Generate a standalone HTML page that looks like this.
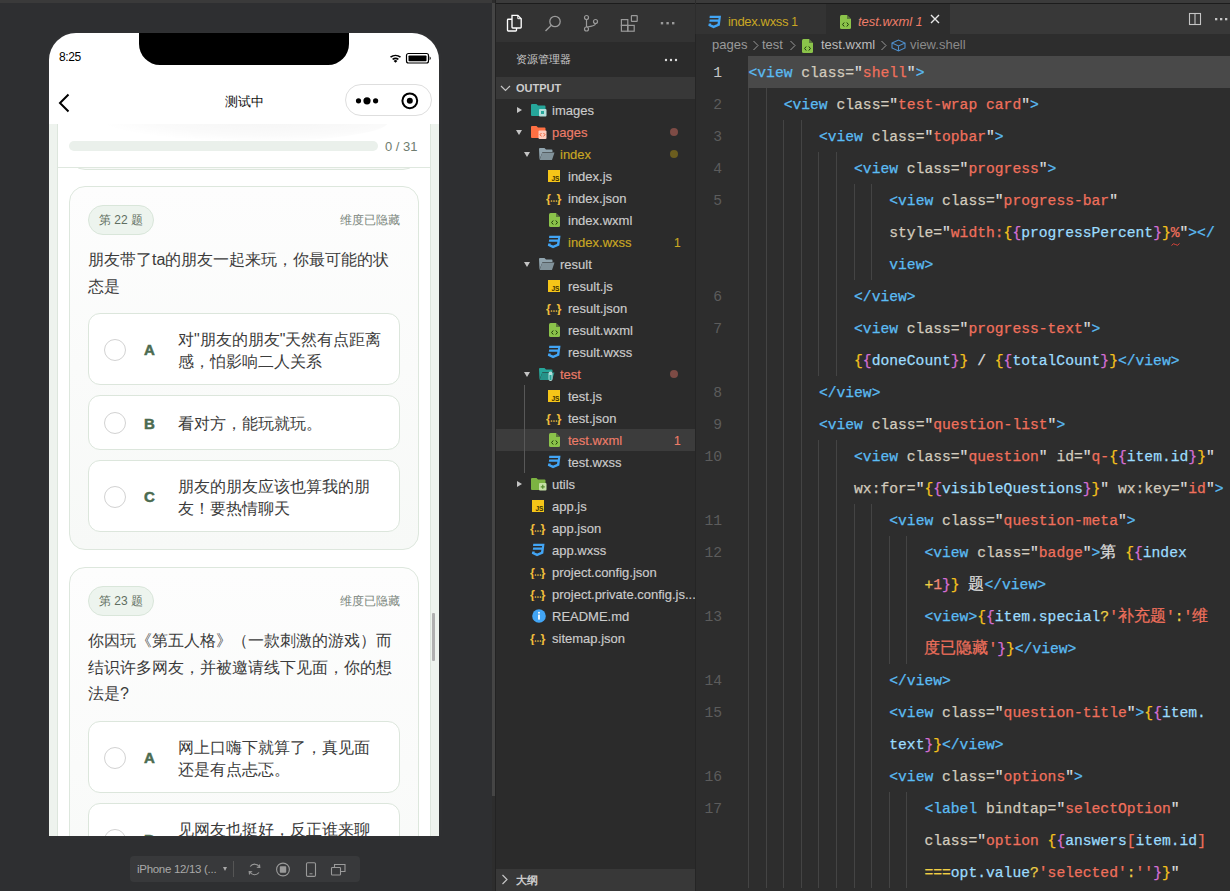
<!DOCTYPE html>
<html><head><meta charset="utf-8">
<style>
*{box-sizing:border-box;margin:0;padding:0}
html,body{width:1230px;height:891px;overflow:hidden;background:#2d2d2d;font-family:"Liberation Sans",sans-serif}
.abs{position:absolute}
#sim{position:absolute;left:0;top:0;width:492px;height:891px;background:#2e2f31}
#sim .topstrip{position:absolute;left:0;top:0;width:492px;height:3px;background:#3a3a3a}
#split{position:absolute;left:492px;top:3px;width:3px;height:793px;background:#454545}
#splitline{position:absolute;left:495px;top:0;width:1px;height:891px;background:#232323}
#phone{position:absolute;left:49px;top:33px;width:390px;height:803px;background:#fff;border-radius:27px 27px 0 0;overflow:hidden;box-shadow:0 0 6px rgba(255,255,255,0.035)}
.notch{position:absolute;left:90px;top:-1px;width:210px;height:33px;background:#000;border-radius:0 0 21px 21px}
.time{position:absolute;left:10px;top:17px;font-size:12px;line-height:14px;color:#000;letter-spacing:-0.4px}
.navtitle{position:absolute;left:0;width:390px;top:61px;text-align:center;font-size:13px;line-height:16px;color:#111}
.capsule{position:absolute;left:296px;top:51px;width:87px;height:32px;border:1px solid #dedede;border-radius:16px;background:#fff}
#content{position:absolute;left:0;top:91px;width:390px;height:712px;background:#eef3ee;overflow:hidden}
.wrap{position:absolute;left:8px;top:-200px;width:374px;height:1200px;background:#fff;border:1px solid #dde6dd;border-radius:16px}
.card{position:absolute;left:20px;width:350px;border:1px solid #dde7dd;border-radius:16px;background:linear-gradient(#fdfdfd,#f7f9f7)}
.badge{position:absolute;left:18px;top:18px;width:66px;height:30px;border:1px solid #d9e6da;background:#edf4ee;border-radius:15px;font-size:12px;line-height:28px;text-align:center;color:#5f6e61}
.hide{position:absolute;right:18px;top:26px;font-size:12px;line-height:14px;color:#7b867c}
.qt{position:absolute;left:18px;width:314px;font-size:16px;line-height:26.6px;color:#3b3b3b}
.opt{position:absolute;left:18px;width:312px;border:1px solid #dce6dc;border-radius:12px;background:#fff}
.radio{position:absolute;left:15px;width:22px;height:22px;border:1px solid #d2d2d2;border-radius:50%}
.let{position:absolute;left:55px;font-size:15px;font-weight:bold;color:#4b6b50;line-height:16px;-webkit-text-stroke:0.5px #4b6b50}
.otxt{position:absolute;left:89px;width:205px;font-size:16px;line-height:22px;color:#3b3b3b}
#toolbar{position:absolute;left:130px;top:856px;width:230px;height:26px;background:#38393b;border-radius:4px}

#exp{position:absolute;left:496px;top:0;width:199px;height:891px;background:#2b2b2b;overflow:hidden}
#expborder{position:absolute;left:695px;top:34px;width:1px;height:857px;background:#252525}
.strip{position:absolute;left:0;top:0;height:3px;background:#3b3b3b}
.stripline{position:absolute;left:0;top:3px;height:1px;background:#1c1c1c}
.row{position:absolute;left:0;width:199px;height:22px;font-size:13px;line-height:22px;color:#cccccc;white-space:nowrap;-webkit-text-stroke:0.15px currentColor}
.row .tx{position:absolute;top:1px}
.tri{position:absolute;top:8px;width:0;height:0}
.tri.r{border-top:3.5px solid transparent;border-bottom:3.5px solid transparent;border-left:5px solid #c5c5c5;top:7.5px}
.tri.d{border-left:3.5px solid transparent;border-right:3.5px solid transparent;border-top:5px solid #c5c5c5;top:9px}
.ic{position:absolute;top:4px}
.dot{position:absolute;left:174px;top:7px;width:8px;height:8px;border-radius:50%}
.cnt{position:absolute;left:178px;top:1px;font-size:12px}

#ed{position:absolute;left:696px;top:0;width:534px;height:891px;background:#2d2d2d;overflow:hidden}
.ln{position:absolute;margin-top:1px;left:-1px;width:27px;text-align:right;font-family:"Liberation Mono",monospace;font-size:14.66px;line-height:32px;color:#5c5c5c}
.cl{position:absolute;margin-top:1px;left:52.5px;height:32px;-webkit-text-stroke:0.25px currentColor;font-family:"Liberation Mono",monospace;font-size:14.66px;line-height:32px;white-space:pre;color:#d4d4d4}
.g{position:absolute;width:1px;background:#444}
.t{color:#5bbcf4}.a{color:#d2cbbd}.s{color:#f0705c}.y{color:#f5c21d}.m{color:#d66fd6}.v{color:#9cdcfe}.w{color:#dcdcdc}.o{color:#efcf45}.n{color:#f08878}
.cj{font-size:16px}
</style></head><body>
<div id="sim">
  <div class="topstrip"></div>
  <div id="phone">
    <div class="notch"></div>
    <div class="time">8:25</div>
    <svg class="abs" style="left:340px;top:19px" width="45" height="14" viewBox="0 0 45 14">
      <path d="M1.5 5.2 A8 8 0 0 1 11.5 5.2" fill="none" stroke="#000" stroke-width="1.6"/>
      <path d="M3.6 7.4 A5 5 0 0 1 9.4 7.4" fill="none" stroke="#000" stroke-width="1.6"/>
      <path d="M6.5 10.8 L4.6 8.9 A2.8 2.8 0 0 1 8.4 8.9 Z" fill="#000"/>
      <rect x="17.5" y="1.5" width="22" height="9.5" rx="2" fill="none" stroke="#000" stroke-width="1.2"/>
      <rect x="19.5" y="3.4" width="18" height="5.8" rx="0.8" fill="#000"/>
      <path d="M40.6 4.3 Q43 6.2 40.6 8.2 Z" fill="#000"/>
    </svg>
    <svg class="abs" style="left:8px;top:59px" width="16" height="22" viewBox="0 0 16 22"><polyline points="11.5,2.5 3,11 11.5,19.5" fill="none" stroke="#000" stroke-width="2"/></svg>
    <div class="navtitle">测试中</div>
    <div class="capsule">
      <svg class="abs" style="left:0;top:0" width="87" height="32" viewBox="0 0 87 32">
        <circle cx="12.5" cy="15.8" r="2.6" fill="#000"/><circle cx="21" cy="15.8" r="3.6" fill="#000"/><circle cx="29.6" cy="15.8" r="2.6" fill="#000"/>
        <circle cx="63.8" cy="15.8" r="7.4" fill="none" stroke="#000" stroke-width="2"/><circle cx="63.8" cy="15.8" r="3" fill="#000"/>
      </svg>
    </div>
    <div id="content">
      <div class="wrap"></div>
      <div class="card" style="top:-250px;height:296px"></div>
      <div class="abs" style="left:9px;top:0;width:372px;height:44px;background:#fff;border-bottom:1px solid #dfe8df;overflow:hidden"><div class="abs" style="left:40px;top:-22px;width:290px;height:40px;border-radius:50%;background:radial-gradient(ellipse at 60% 40%,rgba(0,0,0,0.045),rgba(0,0,0,0.02) 50%,rgba(0,0,0,0) 72%)"></div></div>
      <div class="abs" style="left:20px;top:17px;width:309px;height:10px;border-radius:5px;background:#eaf0eb"></div>
      <div class="abs" style="left:336px;top:15px;font-size:13px;line-height:16px;color:#6f7d70">0 / 31</div>
      <div class="card" style="top:62px;height:364px">
        <div class="badge">第 22 题</div>
        <div class="hide">维度已隐藏</div>
        <div class="qt" style="top:60px">朋友带了ta的朋友一起来玩，你最可能的状态是</div>
        <div class="opt" style="top:126px;height:72px"><div class="radio" style="top:24.5px"></div><div class="let" style="top:28.3px">A</div><div class="otxt" style="top:14.5px">对"朋友的朋友"天然有点距离感，怕影响二人关系</div></div>
        <div class="opt" style="top:208px;height:55px"><div class="radio" style="top:15.8px"></div><div class="let" style="top:19.5px">B</div><div class="otxt" style="top:17px">看对方，能玩就玩。</div></div>
        <div class="opt" style="top:273px;height:72px"><div class="radio" style="top:24.5px"></div><div class="let" style="top:28.3px">C</div><div class="otxt" style="top:14.5px">朋友的朋友应该也算我的朋友！要热情聊天</div></div>
      </div>
      <div class="card" style="top:443px;height:400px">
        <div class="badge">第 23 题</div>
        <div class="hide">维度已隐藏</div>
        <div class="qt" style="top:60px">你因玩《第五人格》（一款刺激的游戏）而结识许多网友，并被邀请线下见面，你的想法是?</div>
        <div class="opt" style="top:153px;height:72px"><div class="radio" style="top:24.5px"></div><div class="let" style="top:28.3px">A</div><div class="otxt" style="top:14.5px">网上口嗨下就算了，真见面还是有点忐忑。</div></div>
        <div class="opt" style="top:235px;height:72px"><div class="radio" style="top:24.5px"></div><div class="let" style="top:28.3px">B</div><div class="otxt" style="top:14.5px">见网友也挺好，反正谁来聊都可以。</div></div>
      </div>
      <div class="abs" style="left:383px;top:489px;width:3px;height:48px;background:#b0b0b0;border-radius:1px"></div>

    </div>
  </div>
  <div id="toolbar">
    <div class="abs" style="left:7px;top:6px;font-size:11.5px;line-height:14px;color:#a9a9a9;letter-spacing:-0.3px">iPhone 12/13 (...</div>
    <div class="abs" style="left:93px;top:11px;width:0;height:0;border-left:2.5px solid transparent;border-right:2.5px solid transparent;border-top:4px solid #a9a9a9"></div>
    <div class="abs" style="left:103px;top:5px;width:1px;height:16px;background:#555"></div>
    <svg class="abs" style="left:117px;top:6px" width="150" height="15" viewBox="0 0 150 15">
      <path d="M3.2 4.5 A5.5 5.5 0 0 1 12.5 5" fill="none" stroke="#9a9a9a" stroke-width="1.1"/>
      <path d="M12 10.5 A5.5 5.5 0 0 1 2.8 10" fill="none" stroke="#9a9a9a" stroke-width="1.1"/>
      <path d="M12.5 2.5 L12.8 5.5 L9.8 5.3" fill="none" stroke="#9a9a9a" stroke-width="1.1"/>
      <path d="M2.5 12.5 L2.2 9.5 L5.2 9.7" fill="none" stroke="#9a9a9a" stroke-width="1.1"/>
      <circle cx="36" cy="7.5" r="6.4" fill="none" stroke="#9a9a9a" stroke-width="1.1"/>
      <rect x="32.8" y="4.3" width="6.4" height="6.4" rx="0.8" fill="#9a9a9a"/>
      <rect x="59.5" y="0.8" width="9" height="13.6" rx="1.2" fill="none" stroke="#9a9a9a" stroke-width="1.1"/>
      <line x1="62.5" y1="11.8" x2="65.5" y2="11.8" stroke="#9a9a9a" stroke-width="1"/>
      <rect x="84.5" y="5.5" width="9" height="7.5" rx="0.8" fill="none" stroke="#9a9a9a" stroke-width="1.1"/>
      <path d="M87.5 5.5 V2.5 H98 V9.5 H93.5" fill="none" stroke="#9a9a9a" stroke-width="1.1"/>
    </svg>
  </div>
</div>
<div id="split"></div><div id="splitline"></div>
<div id="exp">
  <div class="strip" style="width:199px"></div><div class="stripline" style="width:199px"></div>
  <div class="abs" style="left:0;top:4px;width:199px;height:38px;background:#333333"></div>
  <svg class="abs" style="left:8px;top:12px" width="180" height="22" viewBox="0 0 180 22">
    <path d="M8 3.3 H13.8 L17.2 6.7 V15.2 Q17.2 16 16.4 16 H8.8 Q8 16 8 15.2 Z" fill="none" stroke="#fff" stroke-width="1.35"/>
    <path d="M13.8 3.3 V6.7 H17.2" fill="none" stroke="#fff" stroke-width="1"/>
    <path d="M8 7.2 H4.3 Q3.5 7.2 3.5 8 V18.2 Q3.5 19 4.3 19 H11.7 Q12.5 19 12.5 18.2 V16" fill="none" stroke="#fff" stroke-width="1.35"/>
    <circle cx="51" cy="9.5" r="5.2" fill="none" stroke="#9a9a9a" stroke-width="1.3"/>
    <line x1="47.3" y1="13.3" x2="41.5" y2="19" stroke="#9a9a9a" stroke-width="1.4"/>
    <circle cx="82.5" cy="5.5" r="2" fill="none" stroke="#9a9a9a" stroke-width="1.2"/>
    <circle cx="82.5" cy="17" r="2" fill="none" stroke="#9a9a9a" stroke-width="1.2"/>
    <circle cx="91.5" cy="9.5" r="2" fill="none" stroke="#9a9a9a" stroke-width="1.2"/>
    <path d="M82.5 7.5 V15 M91.5 11.5 Q91.5 14 83 15" fill="none" stroke="#9a9a9a" stroke-width="1.2"/>
    <rect x="117.4" y="7.6" width="6.4" height="5.8" fill="none" stroke="#9a9a9a" stroke-width="1.2"/>
    <rect x="117.4" y="13.4" width="6.4" height="5.8" fill="none" stroke="#9a9a9a" stroke-width="1.2"/>
    <rect x="123.8" y="13.4" width="6.4" height="5.8" fill="none" stroke="#9a9a9a" stroke-width="1.2"/>
    <rect x="127.4" y="3.6" width="5.8" height="5.8" rx="0.5" fill="none" stroke="#9a9a9a" stroke-width="1.2"/>
    <rect x="156.8" y="10" width="2.4" height="2.4" fill="#9a9a9a"/><rect x="162.4" y="10" width="2.4" height="2.4" fill="#9a9a9a"/><rect x="168" y="10" width="2.4" height="2.4" fill="#9a9a9a"/>
  </svg>
  <div class="abs" style="left:0;top:42px;width:199px;height:35px;background:#2b2b2b"></div>
  <div class="abs" style="left:20px;top:52px;font-size:11px;line-height:14px;color:#cccccc">资源管理器</div>
  <svg class="abs" style="left:168px;top:57px" width="16" height="6" viewBox="0 0 16 6"><circle cx="2" cy="3" r="1.2" fill="#ddd"/><circle cx="7" cy="3" r="1.2" fill="#ddd"/><circle cx="12" cy="3" r="1.2" fill="#ddd"/></svg>
  <div class="abs" style="left:0;top:77px;width:199px;height:22px;background:#383838"></div>
  <svg class="abs" style="left:4px;top:85px" width="12" height="8" viewBox="0 0 12 8"><polyline points="1,1 5.5,5.5 10,1" fill="none" stroke="#c5c5c5" stroke-width="1.2"/></svg>
  <div class="abs" style="left:20px;top:81px;font-size:11px;line-height:14px;font-weight:bold;color:#cccccc">OUTPUT</div>
  <div class="abs" style="left:28px;top:385px;width:1px;height:88px;background:#585858;z-index:2"></div>
  <div class="row" style="top:99px;"><div class="tri r" style="left:21px"></div><svg class="ic" style="left:35px;top:4px" width="16" height="14" viewBox="0 0 16 14"><path d="M0 2 Q0 1 1 1 H5.5 L7 2.6 H13.5 Q14.5 2.6 14.5 3.6 V12 Q14.5 13 13.5 13 H1 Q0 13 0 12 Z" fill="#26a69a"/><rect x="8" y="6" width="7.5" height="7.5" rx="1" fill="#b2dfdb"/><path d="M10 8 h3 v3 h-3z" fill="#26a69a"/></svg><span class="tx" style="left:56px">images</span></div>
  <div class="row" style="top:121px;"><div class="tri d" style="left:20px"></div><svg class="ic" style="left:35px;top:4px" width="16" height="14" viewBox="0 0 16 14"><path d="M0 2 Q0 1 1 1 H5.5 L7 2.6 H13.5 Q14.5 2.6 14.5 3.6 V12 Q14.5 13 13.5 13 H1 Q0 13 0 12 Z" fill="#ff7043"/><rect x="7.5" y="5.5" width="8" height="8.5" rx="1" fill="#ffccbc"/><path d="M10.5 8 L9 9.7 L10.5 11.4 M12.5 8 L14 9.7 L12.5 11.4" fill="none" stroke="#e64a19" stroke-width="0.8"/></svg><span class="tx" style="left:56px;color:#ee7d69">pages</span><div class="dot" style="background:#7d4b45"></div></div>
  <div class="row" style="top:143px;"><div class="tri d" style="left:28px"></div><svg class="ic" style="left:43px;top:4px" width="16" height="14" viewBox="0 0 16 14"><path d="M0 2 Q0 1 1 1 H5.5 L7 2.6 H12.5 Q13.5 2.6 13.5 3.6 V5 H3.5 L0.5 12.5 Z" fill="#90a4ae"/><path d="M3.3 5.5 H15.5 L13 13 H0.6 Z" fill="#90a4ae" opacity="0.85"/></svg><span class="tx" style="left:64px;color:#c9a723">index</span><div class="dot" style="background:#6b5d1f"></div></div>
  <div class="row" style="top:165px;"><svg class="ic" style="left:52px;top:5px" width="13" height="12" viewBox="0 0 13 12"><rect x="0" y="0" width="12" height="12" fill="#f5c518"/><text x="3.5" y="10.5" font-family="Liberation Sans" font-size="6.5" font-weight="bold" fill="#3a3000">JS</text></svg><span class="tx" style="left:72px">index.js</span></div>
  <div class="row" style="top:187px;"><svg class="ic" style="left:50px;top:4px" width="16" height="14" viewBox="0 0 16 14"><text x="0" y="11.5" font-family="Liberation Sans" font-size="12.5" font-weight="bold" fill="#f0bd3c">{</text><text x="10.6" y="11.5" font-family="Liberation Sans" font-size="12.5" font-weight="bold" fill="#f0bd3c">}</text><circle cx="5.5" cy="10" r="0.85" fill="#f0bd3c"/><circle cx="8" cy="10" r="0.85" fill="#f0bd3c"/><circle cx="10.5" cy="10" r="0.85" fill="#f0bd3c"/></svg><span class="tx" style="left:72px">index.json</span></div>
  <div class="row" style="top:209px;"><svg class="ic" style="left:53px;top:4px" width="11" height="14" viewBox="0 0 11 14"><path d="M1.5 0 H7 L11 4 V12.5 Q11 14 9.5 14 H1.5 Q0 14 0 12.5 V1.5 Q0 0 1.5 0 Z" fill="#8bc34a"/><path d="M7 0 V4 H11" fill="#2b2b2b" opacity="0.5"/><path d="M4.2 7.5 L2.6 9.5 L4.2 11.5 M6.8 7.5 L8.4 9.5 L6.8 11.5" fill="none" stroke="#1f3a0a" stroke-width="1"/></svg><span class="tx" style="left:72px">index.wxml</span></div>
  <div class="row" style="top:231px;"><svg class="ic" style="left:51px;top:4px" width="14" height="14" viewBox="0 0 14 14"><path d="M2.3 0.8 H13.5 L12.3 10.5 L6 13.2 L0.8 10.8 L1.3 8.4 H3.7 L3.5 9.4 L6.2 10.6 L9.9 9.1 L10.4 6.7 H1.8 L2.2 4.6 H10.8 L11.1 3 H2 Z" fill="#42a5f5"/></svg><span class="tx" style="left:72px;color:#c9a723">index.wxss</span><span class="cnt" style="color:#c9a723">1</span></div>
  <div class="row" style="top:253px;"><div class="tri d" style="left:28px"></div><svg class="ic" style="left:43px;top:4px" width="16" height="14" viewBox="0 0 16 14"><path d="M0 2 Q0 1 1 1 H5.5 L7 2.6 H12.5 Q13.5 2.6 13.5 3.6 V5 H3.5 L0.5 12.5 Z" fill="#90a4ae"/><path d="M3.3 5.5 H15.5 L13 13 H0.6 Z" fill="#90a4ae" opacity="0.85"/></svg><span class="tx" style="left:64px">result</span></div>
  <div class="row" style="top:275px;"><svg class="ic" style="left:52px;top:5px" width="13" height="12" viewBox="0 0 13 12"><rect x="0" y="0" width="12" height="12" fill="#f5c518"/><text x="3.5" y="10.5" font-family="Liberation Sans" font-size="6.5" font-weight="bold" fill="#3a3000">JS</text></svg><span class="tx" style="left:72px">result.js</span></div>
  <div class="row" style="top:297px;"><svg class="ic" style="left:50px;top:4px" width="16" height="14" viewBox="0 0 16 14"><text x="0" y="11.5" font-family="Liberation Sans" font-size="12.5" font-weight="bold" fill="#f0bd3c">{</text><text x="10.6" y="11.5" font-family="Liberation Sans" font-size="12.5" font-weight="bold" fill="#f0bd3c">}</text><circle cx="5.5" cy="10" r="0.85" fill="#f0bd3c"/><circle cx="8" cy="10" r="0.85" fill="#f0bd3c"/><circle cx="10.5" cy="10" r="0.85" fill="#f0bd3c"/></svg><span class="tx" style="left:72px">result.json</span></div>
  <div class="row" style="top:319px;"><svg class="ic" style="left:53px;top:4px" width="11" height="14" viewBox="0 0 11 14"><path d="M1.5 0 H7 L11 4 V12.5 Q11 14 9.5 14 H1.5 Q0 14 0 12.5 V1.5 Q0 0 1.5 0 Z" fill="#8bc34a"/><path d="M7 0 V4 H11" fill="#2b2b2b" opacity="0.5"/><path d="M4.2 7.5 L2.6 9.5 L4.2 11.5 M6.8 7.5 L8.4 9.5 L6.8 11.5" fill="none" stroke="#1f3a0a" stroke-width="1"/></svg><span class="tx" style="left:72px">result.wxml</span></div>
  <div class="row" style="top:341px;"><svg class="ic" style="left:51px;top:4px" width="14" height="14" viewBox="0 0 14 14"><path d="M2.3 0.8 H13.5 L12.3 10.5 L6 13.2 L0.8 10.8 L1.3 8.4 H3.7 L3.5 9.4 L6.2 10.6 L9.9 9.1 L10.4 6.7 H1.8 L2.2 4.6 H10.8 L11.1 3 H2 Z" fill="#42a5f5"/></svg><span class="tx" style="left:72px">result.wxss</span></div>
  <div class="row" style="top:363px;"><div class="tri d" style="left:28px"></div><svg class="ic" style="left:43px;top:4px" width="16" height="14" viewBox="0 0 16 14"><path d="M0 2 Q0 1 1 1 H5.5 L7 2.6 H12.5 Q13.5 2.6 13.5 3.6 V5 H3.5 L0.5 12.5 Z" fill="#26a69a"/><path d="M3.3 5.5 H15.5 L13 13 H0.6 Z" fill="#26a69a" opacity="0.85"/><rect x="9.5" y="4.5" width="4" height="9.5" rx="2" fill="#b2dfdb"/><rect x="10.5" y="8" width="2" height="5" fill="#26a69a"/></svg><span class="tx" style="left:64px;color:#ee7d69">test</span><div class="dot" style="background:#7d4b45"></div></div>
  <div class="row" style="top:385px;"><svg class="ic" style="left:52px;top:5px" width="13" height="12" viewBox="0 0 13 12"><rect x="0" y="0" width="12" height="12" fill="#f5c518"/><text x="3.5" y="10.5" font-family="Liberation Sans" font-size="6.5" font-weight="bold" fill="#3a3000">JS</text></svg><span class="tx" style="left:72px">test.js</span></div>
  <div class="row" style="top:407px;"><svg class="ic" style="left:50px;top:4px" width="16" height="14" viewBox="0 0 16 14"><text x="0" y="11.5" font-family="Liberation Sans" font-size="12.5" font-weight="bold" fill="#f0bd3c">{</text><text x="10.6" y="11.5" font-family="Liberation Sans" font-size="12.5" font-weight="bold" fill="#f0bd3c">}</text><circle cx="5.5" cy="10" r="0.85" fill="#f0bd3c"/><circle cx="8" cy="10" r="0.85" fill="#f0bd3c"/><circle cx="10.5" cy="10" r="0.85" fill="#f0bd3c"/></svg><span class="tx" style="left:72px">test.json</span></div>
  <div class="row" style="top:429px;background:#3c3c3c;"><svg class="ic" style="left:53px;top:4px" width="11" height="14" viewBox="0 0 11 14"><path d="M1.5 0 H7 L11 4 V12.5 Q11 14 9.5 14 H1.5 Q0 14 0 12.5 V1.5 Q0 0 1.5 0 Z" fill="#8bc34a"/><path d="M7 0 V4 H11" fill="#2b2b2b" opacity="0.5"/><path d="M4.2 7.5 L2.6 9.5 L4.2 11.5 M6.8 7.5 L8.4 9.5 L6.8 11.5" fill="none" stroke="#1f3a0a" stroke-width="1"/></svg><span class="tx" style="left:72px;color:#ee7d69">test.wxml</span><span class="cnt" style="color:#ee7d69">1</span></div>
  <div class="row" style="top:451px;"><svg class="ic" style="left:51px;top:4px" width="14" height="14" viewBox="0 0 14 14"><path d="M2.3 0.8 H13.5 L12.3 10.5 L6 13.2 L0.8 10.8 L1.3 8.4 H3.7 L3.5 9.4 L6.2 10.6 L9.9 9.1 L10.4 6.7 H1.8 L2.2 4.6 H10.8 L11.1 3 H2 Z" fill="#42a5f5"/></svg><span class="tx" style="left:72px">test.wxss</span></div>
  <div class="row" style="top:473px;"><div class="tri r" style="left:21px"></div><svg class="ic" style="left:35px;top:4px" width="16" height="14" viewBox="0 0 16 14"><path d="M0 2 Q0 1 1 1 H5.5 L7 2.6 H13.5 Q14.5 2.6 14.5 3.6 V12 Q14.5 13 13.5 13 H1 Q0 13 0 12 Z" fill="#7cb342"/><rect x="8" y="6" width="7.5" height="7.5" rx="1" fill="#c5e1a5"/><path d="M11.75 7.8 V11.8 M9.75 9.8 H13.75" stroke="#558b2f" stroke-width="1.2"/></svg><span class="tx" style="left:56px">utils</span></div>
  <div class="row" style="top:495px;"><svg class="ic" style="left:36px;top:5px" width="13" height="12" viewBox="0 0 13 12"><rect x="0" y="0" width="12" height="12" fill="#f5c518"/><text x="3.5" y="10.5" font-family="Liberation Sans" font-size="6.5" font-weight="bold" fill="#3a3000">JS</text></svg><span class="tx" style="left:56px">app.js</span></div>
  <div class="row" style="top:517px;"><svg class="ic" style="left:34px;top:4px" width="16" height="14" viewBox="0 0 16 14"><text x="0" y="11.5" font-family="Liberation Sans" font-size="12.5" font-weight="bold" fill="#f0bd3c">{</text><text x="10.6" y="11.5" font-family="Liberation Sans" font-size="12.5" font-weight="bold" fill="#f0bd3c">}</text><circle cx="5.5" cy="10" r="0.85" fill="#f0bd3c"/><circle cx="8" cy="10" r="0.85" fill="#f0bd3c"/><circle cx="10.5" cy="10" r="0.85" fill="#f0bd3c"/></svg><span class="tx" style="left:56px">app.json</span></div>
  <div class="row" style="top:539px;"><svg class="ic" style="left:35px;top:4px" width="14" height="14" viewBox="0 0 14 14"><path d="M2.3 0.8 H13.5 L12.3 10.5 L6 13.2 L0.8 10.8 L1.3 8.4 H3.7 L3.5 9.4 L6.2 10.6 L9.9 9.1 L10.4 6.7 H1.8 L2.2 4.6 H10.8 L11.1 3 H2 Z" fill="#42a5f5"/></svg><span class="tx" style="left:56px">app.wxss</span></div>
  <div class="row" style="top:561px;"><svg class="ic" style="left:34px;top:4px" width="16" height="14" viewBox="0 0 16 14"><text x="0" y="11.5" font-family="Liberation Sans" font-size="12.5" font-weight="bold" fill="#f0bd3c">{</text><text x="10.6" y="11.5" font-family="Liberation Sans" font-size="12.5" font-weight="bold" fill="#f0bd3c">}</text><circle cx="5.5" cy="10" r="0.85" fill="#f0bd3c"/><circle cx="8" cy="10" r="0.85" fill="#f0bd3c"/><circle cx="10.5" cy="10" r="0.85" fill="#f0bd3c"/></svg><span class="tx" style="left:56px">project.config.json</span></div>
  <div class="row" style="top:583px;"><svg class="ic" style="left:34px;top:4px" width="16" height="14" viewBox="0 0 16 14"><text x="0" y="11.5" font-family="Liberation Sans" font-size="12.5" font-weight="bold" fill="#f0bd3c">{</text><text x="10.6" y="11.5" font-family="Liberation Sans" font-size="12.5" font-weight="bold" fill="#f0bd3c">}</text><circle cx="5.5" cy="10" r="0.85" fill="#f0bd3c"/><circle cx="8" cy="10" r="0.85" fill="#f0bd3c"/><circle cx="10.5" cy="10" r="0.85" fill="#f0bd3c"/></svg><span class="tx" style="left:56px">project.private.config.js...</span></div>
  <div class="row" style="top:605px;"><svg class="ic" style="left:36px;top:4px" width="14" height="14" viewBox="0 0 14 14"><circle cx="7" cy="7" r="6.8" fill="#42a5f5"/><rect x="6.1" y="5.6" width="1.8" height="5" fill="#fff"/><circle cx="7" cy="3.7" r="1" fill="#fff"/></svg><span class="tx" style="left:56px">README.md</span></div>
  <div class="row" style="top:627px;"><svg class="ic" style="left:34px;top:4px" width="16" height="14" viewBox="0 0 16 14"><text x="0" y="11.5" font-family="Liberation Sans" font-size="12.5" font-weight="bold" fill="#f0bd3c">{</text><text x="10.6" y="11.5" font-family="Liberation Sans" font-size="12.5" font-weight="bold" fill="#f0bd3c">}</text><circle cx="5.5" cy="10" r="0.85" fill="#f0bd3c"/><circle cx="8" cy="10" r="0.85" fill="#f0bd3c"/><circle cx="10.5" cy="10" r="0.85" fill="#f0bd3c"/></svg><span class="tx" style="left:56px">sitemap.json</span></div>
  <div class="abs" style="left:0;top:869px;width:199px;height:22px;background:#383838"></div>
  <svg class="abs" style="left:5px;top:874px" width="8" height="12" viewBox="0 0 8 12"><polyline points="1.5,1 6,5.5 1.5,10" fill="none" stroke="#c5c5c5" stroke-width="1.2"/></svg>
  <div class="abs" style="left:20px;top:873px;font-size:11px;line-height:14px;font-weight:bold;color:#cccccc">大纲</div>
</div>
<div id="expborder"></div>
<div id="ed">
<div class="strip" style="width:534px"></div><div class="stripline" style="width:534px"></div>
<div class="abs" style="left:0;top:4px;width:534px;height:30px;background:#383838"></div>
<div class="abs" style="left:0;top:4px;width:130px;height:30px;background:#333333"></div>
<div class="abs" style="left:130px;top:4px;width:124px;height:30px;background:#2d2d2d"></div>

<svg class="abs" style="left:11px;top:15px" width="15" height="14" viewBox="0 0 14 14"><path d="M2.3 0.8 H13.5 L12.3 10.5 L6 13.2 L0.8 10.8 L1.3 8.4 H3.7 L3.5 9.4 L6.2 10.6 L9.9 9.1 L10.4 6.7 H1.8 L2.2 4.6 H10.8 L11.1 3 H2 Z" fill="#42a5f5"/></svg>
<div class="abs" style="left:32px;top:12px;font-size:13px;line-height:20px;color:#c9a723;white-space:nowrap;letter-spacing:-0.35px">index.wxss <span style="font-size:12px">1</span></div>
<svg class="abs" style="left:143.5px;top:15px" width="11" height="14" viewBox="0 0 11 14"><path d="M1.5 0 H7 L11 4 V12.5 Q11 14 9.5 14 H1.5 Q0 14 0 12.5 V1.5 Q0 0 1.5 0 Z" fill="#8bc34a"/><path d="M7 0 V4 H11" fill="#2d2d2d" opacity="0.5"/><path d="M4.2 7.5 L2.6 9.5 L4.2 11.5 M6.8 7.5 L8.4 9.5 L6.8 11.5" fill="none" stroke="#1f3a0a" stroke-width="1"/></svg>
<div class="abs" style="left:162px;top:12px;font-size:13px;line-height:20px;color:#ee7d69;font-style:italic;white-space:nowrap">test.wxml <span style="font-size:12px">1</span></div>
<svg class="abs" style="left:234px;top:14px" width="10" height="10" viewBox="0 0 10 10"><path d="M1 1 L9 9 M9 1 L1 9" stroke="#e8e8e8" stroke-width="1.4"/></svg>
<svg class="abs" style="left:490px;top:12px" width="44" height="14" viewBox="0 0 44 14"><rect x="3.5" y="1.5" width="11" height="11" fill="none" stroke="#c5c5c5" stroke-width="1.1"/><line x1="9" y1="1.5" x2="9" y2="12.5" stroke="#c5c5c5" stroke-width="1.1"/><rect x="29" y="6" width="2.3" height="2.3" fill="#c5c5c5"/><rect x="34" y="6" width="2.3" height="2.3" fill="#c5c5c5"/><rect x="39" y="6" width="2.3" height="2.3" fill="#c5c5c5"/></svg>
<div class="abs" style="left:16px;top:37px;font-size:13px;line-height:16px;color:#9a9a9a;white-space:nowrap">pages</div>
<svg class="abs" style="left:56px;top:40px" width="8" height="12" viewBox="0 0 8 12"><polyline points="1.5,1 6,5.5 1.5,10" fill="none" stroke="#9a9a9a" stroke-width="1"/></svg>
<div class="abs" style="left:66px;top:37px;font-size:13px;line-height:16px;color:#9a9a9a;white-space:nowrap">test</div>
<svg class="abs" style="left:93px;top:40px" width="8" height="12" viewBox="0 0 8 12"><polyline points="1.5,1 6,5.5 1.5,10" fill="none" stroke="#9a9a9a" stroke-width="1"/></svg>
<svg class="abs" style="left:105.5px;top:38.5px" width="11" height="14" viewBox="0 0 11 14"><path d="M1.5 0 H7 L11 4 V12.5 Q11 14 9.5 14 H1.5 Q0 14 0 12.5 V1.5 Q0 0 1.5 0 Z" fill="#8bc34a"/><path d="M7 0 V4 H11" fill="#2d2d2d" opacity="0.5"/><path d="M4.2 7.5 L2.6 9.5 L4.2 11.5 M6.8 7.5 L8.4 9.5 L6.8 11.5" fill="none" stroke="#1f3a0a" stroke-width="1"/></svg>
<div class="abs" style="left:125px;top:37px;font-size:13px;line-height:16px;color:#bbbbbb;white-space:nowrap">test.wxml</div>
<svg class="abs" style="left:184px;top:40px" width="8" height="12" viewBox="0 0 8 12"><polyline points="1.5,1 6,5.5 1.5,10" fill="none" stroke="#9a9a9a" stroke-width="1"/></svg>
<svg class="abs" style="left:195px;top:39px" width="15" height="13" viewBox="0 0 15 13"><path d="M1 4 L7.5 1 L14 4 V9 L7.5 12 L1 9 Z M1 4 L7.5 7 L14 4 M7.5 7 V12" fill="none" stroke="#4f8fcc" stroke-width="1.1"/></svg>
<div class="abs" style="left:214px;top:37px;font-size:13px;line-height:16px;color:#8a8a8a;white-space:nowrap">view.shell</div>
<div class="abs" style="left:52px;top:56px;width:482px;height:32px;background:#494949"></div>
<div class="ln" style="top:56px;color:#c6c6c6">1</div>
<div class="cl" style="top:56px;left:52.50px"><span class="t">&lt;view</span> <span class="a">class=</span><span class="w">"</span><span class="s">shell</span><span class="w">"</span><span class="t">&gt;</span></div>
<div class="ln" style="top:88px;color:#5c5c5c">2</div>
<div class="g" style="left:52.0px;top:88px;height:32px"></div>
<div class="g" style="left:69.6px;top:88px;height:32px"></div>
<div class="cl" style="top:88px;left:87.69px"><span class="t">&lt;view</span> <span class="a">class=</span><span class="w">"</span><span class="s">test-wrap card</span><span class="w">"</span><span class="t">&gt;</span></div>
<div class="ln" style="top:120px;color:#5c5c5c">3</div>
<div class="g" style="left:52.0px;top:120px;height:32px"></div>
<div class="g" style="left:69.6px;top:120px;height:32px"></div>
<div class="g" style="left:87.2px;top:120px;height:32px"></div>
<div class="g" style="left:104.8px;top:120px;height:32px"></div>
<div class="cl" style="top:120px;left:122.88px"><span class="t">&lt;view</span> <span class="a">class=</span><span class="w">"</span><span class="s">topbar</span><span class="w">"</span><span class="t">&gt;</span></div>
<div class="ln" style="top:152px;color:#5c5c5c">4</div>
<div class="g" style="left:52.0px;top:152px;height:32px"></div>
<div class="g" style="left:69.6px;top:152px;height:32px"></div>
<div class="g" style="left:87.2px;top:152px;height:32px"></div>
<div class="g" style="left:104.8px;top:152px;height:32px"></div>
<div class="g" style="left:122.4px;top:152px;height:32px"></div>
<div class="g" style="left:140.0px;top:152px;height:32px"></div>
<div class="cl" style="top:152px;left:158.06px"><span class="t">&lt;view</span> <span class="a">class=</span><span class="w">"</span><span class="s">progress</span><span class="w">"</span><span class="t">&gt;</span></div>
<div class="ln" style="top:184px;color:#5c5c5c">5</div>
<div class="g" style="left:52.0px;top:184px;height:32px"></div>
<div class="g" style="left:69.6px;top:184px;height:32px"></div>
<div class="g" style="left:87.2px;top:184px;height:32px"></div>
<div class="g" style="left:104.8px;top:184px;height:32px"></div>
<div class="g" style="left:122.4px;top:184px;height:32px"></div>
<div class="g" style="left:140.0px;top:184px;height:32px"></div>
<div class="g" style="left:157.6px;top:184px;height:32px"></div>
<div class="g" style="left:175.2px;top:184px;height:32px"></div>
<div class="cl" style="top:184px;left:193.25px"><span class="t">&lt;view</span> <span class="a">class=</span><span class="w">"</span><span class="s">progress-bar</span><span class="w">"</span></div>
<div class="g" style="left:52.0px;top:216px;height:32px"></div>
<div class="g" style="left:69.6px;top:216px;height:32px"></div>
<div class="g" style="left:87.2px;top:216px;height:32px"></div>
<div class="g" style="left:104.8px;top:216px;height:32px"></div>
<div class="g" style="left:122.4px;top:216px;height:32px"></div>
<div class="g" style="left:140.0px;top:216px;height:32px"></div>
<div class="g" style="left:157.6px;top:216px;height:32px"></div>
<div class="g" style="left:175.2px;top:216px;height:32px"></div>
<div class="cl" style="top:216px;left:193.25px"><span class="a">style=</span><span class="w">"</span><span class="s">width:</span><span class="y">{</span><span class="m">{</span><span class="v">progressPercent</span><span class="m">}</span><span class="y">}</span><span class="s" style="position:relative">%<svg style="position:absolute;left:0;top:17px" width="9" height="5" viewBox="0 0 9 5"><path d="M0.5 3.5 Q2.5 0.5 4.5 2.5 T8.5 1.5" fill="none" stroke="#e0443a" stroke-width="1"/></svg></span><span class="w">"</span><span class="t">&gt;&lt;/</span></div>
<div class="g" style="left:52.0px;top:248px;height:32px"></div>
<div class="g" style="left:69.6px;top:248px;height:32px"></div>
<div class="g" style="left:87.2px;top:248px;height:32px"></div>
<div class="g" style="left:104.8px;top:248px;height:32px"></div>
<div class="g" style="left:122.4px;top:248px;height:32px"></div>
<div class="g" style="left:140.0px;top:248px;height:32px"></div>
<div class="g" style="left:157.6px;top:248px;height:32px"></div>
<div class="g" style="left:175.2px;top:248px;height:32px"></div>
<div class="cl" style="top:248px;left:193.25px"><span class="t">view&gt;</span></div>
<div class="ln" style="top:280px;color:#5c5c5c">6</div>
<div class="g" style="left:52.0px;top:280px;height:32px"></div>
<div class="g" style="left:69.6px;top:280px;height:32px"></div>
<div class="g" style="left:87.2px;top:280px;height:32px"></div>
<div class="g" style="left:104.8px;top:280px;height:32px"></div>
<div class="g" style="left:122.4px;top:280px;height:32px"></div>
<div class="g" style="left:140.0px;top:280px;height:32px"></div>
<div class="cl" style="top:280px;left:158.06px"><span class="t">&lt;/view&gt;</span></div>
<div class="ln" style="top:312px;color:#5c5c5c">7</div>
<div class="g" style="left:52.0px;top:312px;height:32px"></div>
<div class="g" style="left:69.6px;top:312px;height:32px"></div>
<div class="g" style="left:87.2px;top:312px;height:32px"></div>
<div class="g" style="left:104.8px;top:312px;height:32px"></div>
<div class="g" style="left:122.4px;top:312px;height:32px"></div>
<div class="g" style="left:140.0px;top:312px;height:32px"></div>
<div class="cl" style="top:312px;left:158.06px"><span class="t">&lt;view</span> <span class="a">class=</span><span class="w">"</span><span class="s">progress-text</span><span class="w">"</span><span class="t">&gt;</span></div>
<div class="g" style="left:52.0px;top:344px;height:32px"></div>
<div class="g" style="left:69.6px;top:344px;height:32px"></div>
<div class="g" style="left:87.2px;top:344px;height:32px"></div>
<div class="g" style="left:104.8px;top:344px;height:32px"></div>
<div class="g" style="left:122.4px;top:344px;height:32px"></div>
<div class="g" style="left:140.0px;top:344px;height:32px"></div>
<div class="cl" style="top:344px;left:158.06px"><span class="y">{</span><span class="m">{</span><span class="v">doneCount</span><span class="m">}</span><span class="y">}</span><span class="w"> / </span><span class="y">{</span><span class="m">{</span><span class="v">totalCount</span><span class="m">}</span><span class="y">}</span><span class="t">&lt;/view&gt;</span></div>
<div class="ln" style="top:376px;color:#5c5c5c">8</div>
<div class="g" style="left:52.0px;top:376px;height:32px"></div>
<div class="g" style="left:69.6px;top:376px;height:32px"></div>
<div class="g" style="left:87.2px;top:376px;height:32px"></div>
<div class="g" style="left:104.8px;top:376px;height:32px"></div>
<div class="cl" style="top:376px;left:122.88px"><span class="t">&lt;/view&gt;</span></div>
<div class="ln" style="top:408px;color:#5c5c5c">9</div>
<div class="g" style="left:52.0px;top:408px;height:32px"></div>
<div class="g" style="left:69.6px;top:408px;height:32px"></div>
<div class="g" style="left:87.2px;top:408px;height:32px"></div>
<div class="g" style="left:104.8px;top:408px;height:32px"></div>
<div class="cl" style="top:408px;left:122.88px"><span class="t">&lt;view</span> <span class="a">class=</span><span class="w">"</span><span class="s">question-list</span><span class="w">"</span><span class="t">&gt;</span></div>
<div class="ln" style="top:440px;color:#5c5c5c">10</div>
<div class="g" style="left:52.0px;top:440px;height:32px"></div>
<div class="g" style="left:69.6px;top:440px;height:32px"></div>
<div class="g" style="left:87.2px;top:440px;height:32px"></div>
<div class="g" style="left:104.8px;top:440px;height:32px"></div>
<div class="g" style="left:122.4px;top:440px;height:32px"></div>
<div class="g" style="left:140.0px;top:440px;height:32px"></div>
<div class="cl" style="top:440px;left:158.06px"><span class="t">&lt;view</span> <span class="a">class=</span><span class="w">"</span><span class="s">question</span><span class="w">"</span> <span class="a">id=</span><span class="w">"</span><span class="s">q-</span><span class="y">{</span><span class="m">{</span><span class="v">item.id</span><span class="m">}</span><span class="y">}</span><span class="w">"</span></div>
<div class="g" style="left:52.0px;top:472px;height:32px"></div>
<div class="g" style="left:69.6px;top:472px;height:32px"></div>
<div class="g" style="left:87.2px;top:472px;height:32px"></div>
<div class="g" style="left:104.8px;top:472px;height:32px"></div>
<div class="g" style="left:122.4px;top:472px;height:32px"></div>
<div class="g" style="left:140.0px;top:472px;height:32px"></div>
<div class="cl" style="top:472px;left:158.06px"><span class="a">wx:for=</span><span class="w">"</span><span class="y">{</span><span class="m">{</span><span class="v">visibleQuestions</span><span class="m">}</span><span class="y">}</span><span class="w">"</span> <span class="a">wx:key=</span><span class="w">"</span><span class="s">id</span><span class="w">"</span><span class="t">&gt;</span></div>
<div class="ln" style="top:504px;color:#5c5c5c">11</div>
<div class="g" style="left:52.0px;top:504px;height:32px"></div>
<div class="g" style="left:69.6px;top:504px;height:32px"></div>
<div class="g" style="left:87.2px;top:504px;height:32px"></div>
<div class="g" style="left:104.8px;top:504px;height:32px"></div>
<div class="g" style="left:122.4px;top:504px;height:32px"></div>
<div class="g" style="left:140.0px;top:504px;height:32px"></div>
<div class="g" style="left:157.6px;top:504px;height:32px"></div>
<div class="g" style="left:175.2px;top:504px;height:32px"></div>
<div class="cl" style="top:504px;left:193.25px"><span class="t">&lt;view</span> <span class="a">class=</span><span class="w">"</span><span class="s">question-meta</span><span class="w">"</span><span class="t">&gt;</span></div>
<div class="ln" style="top:536px;color:#5c5c5c">12</div>
<div class="g" style="left:52.0px;top:536px;height:32px"></div>
<div class="g" style="left:69.6px;top:536px;height:32px"></div>
<div class="g" style="left:87.2px;top:536px;height:32px"></div>
<div class="g" style="left:104.8px;top:536px;height:32px"></div>
<div class="g" style="left:122.4px;top:536px;height:32px"></div>
<div class="g" style="left:140.0px;top:536px;height:32px"></div>
<div class="g" style="left:157.6px;top:536px;height:32px"></div>
<div class="g" style="left:175.2px;top:536px;height:32px"></div>
<div class="g" style="left:192.8px;top:536px;height:32px"></div>
<div class="g" style="left:210.3px;top:536px;height:32px"></div>
<div class="cl" style="top:536px;left:228.44px"><span class="t">&lt;view</span> <span class="a">class=</span><span class="w">"</span><span class="s">badge</span><span class="w">"</span><span class="t">&gt;</span><span class="w cj">第</span> <span class="y">{</span><span class="m">{</span><span class="v">index</span></div>
<div class="g" style="left:52.0px;top:568px;height:32px"></div>
<div class="g" style="left:69.6px;top:568px;height:32px"></div>
<div class="g" style="left:87.2px;top:568px;height:32px"></div>
<div class="g" style="left:104.8px;top:568px;height:32px"></div>
<div class="g" style="left:122.4px;top:568px;height:32px"></div>
<div class="g" style="left:140.0px;top:568px;height:32px"></div>
<div class="g" style="left:157.6px;top:568px;height:32px"></div>
<div class="g" style="left:175.2px;top:568px;height:32px"></div>
<div class="g" style="left:192.8px;top:568px;height:32px"></div>
<div class="g" style="left:210.3px;top:568px;height:32px"></div>
<div class="cl" style="top:568px;left:228.44px"><span class="o">+</span><span class="n">1</span><span class="m">}</span><span class="y">}</span> <span class="w cj">题</span><span class="t">&lt;/view&gt;</span></div>
<div class="ln" style="top:600px;color:#5c5c5c">13</div>
<div class="g" style="left:52.0px;top:600px;height:32px"></div>
<div class="g" style="left:69.6px;top:600px;height:32px"></div>
<div class="g" style="left:87.2px;top:600px;height:32px"></div>
<div class="g" style="left:104.8px;top:600px;height:32px"></div>
<div class="g" style="left:122.4px;top:600px;height:32px"></div>
<div class="g" style="left:140.0px;top:600px;height:32px"></div>
<div class="g" style="left:157.6px;top:600px;height:32px"></div>
<div class="g" style="left:175.2px;top:600px;height:32px"></div>
<div class="g" style="left:192.8px;top:600px;height:32px"></div>
<div class="g" style="left:210.3px;top:600px;height:32px"></div>
<div class="cl" style="top:600px;left:228.44px"><span class="t">&lt;view&gt;</span><span class="y">{</span><span class="m">{</span><span class="v">item.special</span><span class="o">?</span><span class="s">'</span><span class="s cj">补充题</span><span class="s">'</span><span class="o">:</span><span class="s">'</span><span class="s cj">维</span></div>
<div class="g" style="left:52.0px;top:632px;height:32px"></div>
<div class="g" style="left:69.6px;top:632px;height:32px"></div>
<div class="g" style="left:87.2px;top:632px;height:32px"></div>
<div class="g" style="left:104.8px;top:632px;height:32px"></div>
<div class="g" style="left:122.4px;top:632px;height:32px"></div>
<div class="g" style="left:140.0px;top:632px;height:32px"></div>
<div class="g" style="left:157.6px;top:632px;height:32px"></div>
<div class="g" style="left:175.2px;top:632px;height:32px"></div>
<div class="g" style="left:192.8px;top:632px;height:32px"></div>
<div class="g" style="left:210.3px;top:632px;height:32px"></div>
<div class="cl" style="top:632px;left:228.44px"><span class="s cj">度已隐藏</span><span class="s">'</span><span class="m">}</span><span class="y">}</span><span class="t">&lt;/view&gt;</span></div>
<div class="ln" style="top:664px;color:#5c5c5c">14</div>
<div class="g" style="left:52.0px;top:664px;height:32px"></div>
<div class="g" style="left:69.6px;top:664px;height:32px"></div>
<div class="g" style="left:87.2px;top:664px;height:32px"></div>
<div class="g" style="left:104.8px;top:664px;height:32px"></div>
<div class="g" style="left:122.4px;top:664px;height:32px"></div>
<div class="g" style="left:140.0px;top:664px;height:32px"></div>
<div class="g" style="left:157.6px;top:664px;height:32px"></div>
<div class="g" style="left:175.2px;top:664px;height:32px"></div>
<div class="cl" style="top:664px;left:193.25px"><span class="t">&lt;/view&gt;</span></div>
<div class="ln" style="top:696px;color:#5c5c5c">15</div>
<div class="g" style="left:52.0px;top:696px;height:32px"></div>
<div class="g" style="left:69.6px;top:696px;height:32px"></div>
<div class="g" style="left:87.2px;top:696px;height:32px"></div>
<div class="g" style="left:104.8px;top:696px;height:32px"></div>
<div class="g" style="left:122.4px;top:696px;height:32px"></div>
<div class="g" style="left:140.0px;top:696px;height:32px"></div>
<div class="g" style="left:157.6px;top:696px;height:32px"></div>
<div class="g" style="left:175.2px;top:696px;height:32px"></div>
<div class="cl" style="top:696px;left:193.25px"><span class="t">&lt;view</span> <span class="a">class=</span><span class="w">"</span><span class="s">question-title</span><span class="w">"</span><span class="t">&gt;</span><span class="y">{</span><span class="m">{</span><span class="v">item.</span></div>
<div class="g" style="left:52.0px;top:728px;height:32px"></div>
<div class="g" style="left:69.6px;top:728px;height:32px"></div>
<div class="g" style="left:87.2px;top:728px;height:32px"></div>
<div class="g" style="left:104.8px;top:728px;height:32px"></div>
<div class="g" style="left:122.4px;top:728px;height:32px"></div>
<div class="g" style="left:140.0px;top:728px;height:32px"></div>
<div class="g" style="left:157.6px;top:728px;height:32px"></div>
<div class="g" style="left:175.2px;top:728px;height:32px"></div>
<div class="cl" style="top:728px;left:193.25px"><span class="v">text</span><span class="m">}</span><span class="y">}</span><span class="t">&lt;/view&gt;</span></div>
<div class="ln" style="top:760px;color:#5c5c5c">16</div>
<div class="g" style="left:52.0px;top:760px;height:32px"></div>
<div class="g" style="left:69.6px;top:760px;height:32px"></div>
<div class="g" style="left:87.2px;top:760px;height:32px"></div>
<div class="g" style="left:104.8px;top:760px;height:32px"></div>
<div class="g" style="left:122.4px;top:760px;height:32px"></div>
<div class="g" style="left:140.0px;top:760px;height:32px"></div>
<div class="g" style="left:157.6px;top:760px;height:32px"></div>
<div class="g" style="left:175.2px;top:760px;height:32px"></div>
<div class="cl" style="top:760px;left:193.25px"><span class="t">&lt;view</span> <span class="a">class=</span><span class="w">"</span><span class="s">options</span><span class="w">"</span><span class="t">&gt;</span></div>
<div class="ln" style="top:792px;color:#5c5c5c">17</div>
<div class="g" style="left:52.0px;top:792px;height:32px"></div>
<div class="g" style="left:69.6px;top:792px;height:32px"></div>
<div class="g" style="left:87.2px;top:792px;height:32px"></div>
<div class="g" style="left:104.8px;top:792px;height:32px"></div>
<div class="g" style="left:122.4px;top:792px;height:32px"></div>
<div class="g" style="left:140.0px;top:792px;height:32px"></div>
<div class="g" style="left:157.6px;top:792px;height:32px"></div>
<div class="g" style="left:175.2px;top:792px;height:32px"></div>
<div class="g" style="left:192.8px;top:792px;height:32px"></div>
<div class="g" style="left:210.3px;top:792px;height:32px"></div>
<div class="cl" style="top:792px;left:228.44px"><span class="t">&lt;label</span> <span class="a">bindtap=</span><span class="w">"</span><span class="s">selectOption</span><span class="w">"</span></div>
<div class="g" style="left:52.0px;top:824px;height:32px"></div>
<div class="g" style="left:69.6px;top:824px;height:32px"></div>
<div class="g" style="left:87.2px;top:824px;height:32px"></div>
<div class="g" style="left:104.8px;top:824px;height:32px"></div>
<div class="g" style="left:122.4px;top:824px;height:32px"></div>
<div class="g" style="left:140.0px;top:824px;height:32px"></div>
<div class="g" style="left:157.6px;top:824px;height:32px"></div>
<div class="g" style="left:175.2px;top:824px;height:32px"></div>
<div class="g" style="left:192.8px;top:824px;height:32px"></div>
<div class="g" style="left:210.3px;top:824px;height:32px"></div>
<div class="cl" style="top:824px;left:228.44px"><span class="a">class=</span><span class="w">"</span><span class="s">option </span><span class="y">{</span><span class="m">{</span><span class="v">answers</span><span class="s">[</span><span class="v">item.id</span><span class="s">]</span></div>
<div class="g" style="left:52.0px;top:856px;height:32px"></div>
<div class="g" style="left:69.6px;top:856px;height:32px"></div>
<div class="g" style="left:87.2px;top:856px;height:32px"></div>
<div class="g" style="left:104.8px;top:856px;height:32px"></div>
<div class="g" style="left:122.4px;top:856px;height:32px"></div>
<div class="g" style="left:140.0px;top:856px;height:32px"></div>
<div class="g" style="left:157.6px;top:856px;height:32px"></div>
<div class="g" style="left:175.2px;top:856px;height:32px"></div>
<div class="g" style="left:192.8px;top:856px;height:32px"></div>
<div class="g" style="left:210.3px;top:856px;height:32px"></div>
<div class="cl" style="top:856px;left:228.44px"><span class="o">===</span><span class="v">opt.value</span><span class="o">?</span><span class="s">'selected'</span><span class="o">:</span><span class="s">''</span><span class="m">}</span><span class="y">}</span><span class="w">"</span></div>
</div>

</body></html>
